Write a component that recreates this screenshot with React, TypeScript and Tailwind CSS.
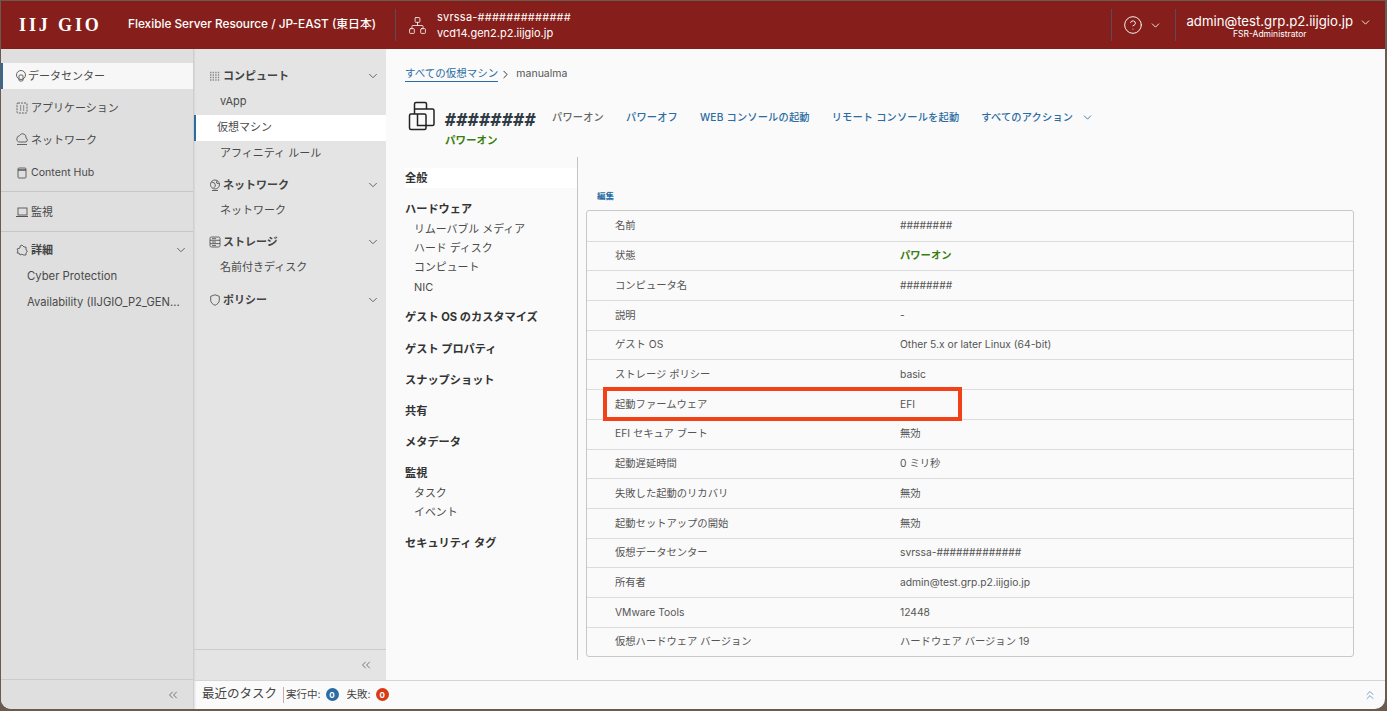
import { ChevronDown, ChevronRight, ChevronsLeft, ChevronsUp, CircleHelp, Network } from "lucide-react";
import type { ReactNode } from "react";

const rows = [
  ["名前", "########"],
  ["状態", "パワーオン"],
  ["コンピュータ名", "########"],
  ["説明", "-"],
  ["ゲスト OS", "Other 5.x or later Linux (64-bit)"],
  ["ストレージ ポリシー", "basic"],
  ["起動ファームウェア", "EFI"],
  ["EFI セキュア ブート", "無効"],
  ["起動遅延時間", "0 ミリ秒"],
  ["失敗した起動のリカバリ", "無効"],
  ["起動セットアップの開始", "無効"],
  ["仮想データセンター", "svrssa-#############"],
  ["所有者", "admin@test.grp.p2.iijgio.jp"],
  ["VMware Tools", "12448"],
  ["仮想ハードウェア バージョン", "ハードウェア バージョン 19"],
];

function Ico({ children }: { children: ReactNode }) {
  return (
    <svg width="14" height="14" viewBox="0 0 14 14" fill="none" stroke="#555" strokeWidth="0.9" className="shrink-0">
      {children}
    </svg>
  );
}

function SideItem({ icon, label, className }: { icon: ReactNode; label: string; className: string }) {
  return (
    <div className={`flex items-center gap-[2px] pl-[14px] text-[#4a4a4a] ${className}`}>
      {icon}
      <span>{label}</span>
    </div>
  );
}

function GroupHead({ icon, label, className }: { icon: ReactNode; label: string; className: string }) {
  return (
    <div className={`flex items-center pl-[14px] pr-[6px] text-[11px] font-bold text-[#444] ${className}`}>
      {icon}
      <span className="ml-[1px] flex-1">{label}</span>
      <ChevronDown size={14} strokeWidth={1.5} className="text-[#555]" />
    </div>
  );
}

function SubItem({ label, active }: { label: string; active?: boolean }) {
  return (
    <div className={`flex h-[26px] items-center pb-[2px] text-[11px] text-[#4a4a4a] ${active ? "border-l-[2px] border-[#2a6ca3] bg-white pl-[21px]" : "pl-[26px]"}`}>
      {label}
    </div>
  );
}

function LeftNav() {
  return (
    <div className="flex w-[193px] shrink-0 flex-col border-r border-[#cfcfcf] bg-[#dfdfdf] shadow-[1px_0_2px_rgba(0,0,0,0.12)]">
      <div className="flex-1 pt-[14px]">
        <div className="flex h-[26px] items-center border-l-[2px] border-[#2a6ca3] bg-[#f7f7f7] pl-[11px] text-[11px] text-[#4a4a4a]">
          <Ico>
            <circle cx="7" cy="6" r="4.5" />
            <rect x="5" y="6" width="4" height="6" rx="1" />
          </Ico>
          <span>データセンター</span>
        </div>
        <SideItem
          className="mt-[6px] h-[26px] text-[11px]"
          label="アプリケーション"
          icon={
            <Ico>
              <rect x="2" y="2" width="10" height="10" rx="1" strokeDasharray="2 1" />
              <path d="M5 5h1.2M8 5h1.2M5 7h1.2M8 7h1.2M5 9h1.2M8 9h1.2" strokeWidth="1.2" />
            </Ico>
          }
        />
        <SideItem
          className="mt-[6px] h-[26px] text-[11px]"
          label="ネットワーク"
          icon={
            <Ico>
              <path d="M3.5 9a3.5 3.5 0 0 1 1-6.4A3.5 3.5 0 0 1 11 5a2.2 2.2 0 0 1 0 4z" />
              <path d="M2 11.5h10" />
            </Ico>
          }
        />
        <SideItem
          className="mt-[7px] h-[26px] text-[10.6px]"
          label="Content Hub"
          icon={
            <Ico>
              <rect x="3" y="2" width="8" height="10" rx="1" />
              <path d="M3 4h8" strokeWidth="1.4" />
            </Ico>
          }
        />
        <div className="mt-[5px] border-t border-[#c6c6c6]" />
        <SideItem
          className="mt-[7px] h-[26px] text-[11px]"
          label="監視"
          icon={
            <Ico>
              <rect x="3" y="3" width="9" height="7" />
              <path d="M1 11.5h12" strokeWidth="1.2" />
            </Ico>
          }
        />
        <div className="mt-[6px] border-t border-[#c6c6c6]" />
        <div className="mt-[5px] flex h-[26px] items-center pl-[14px] pr-[5px] text-[11px] font-bold text-[#444]">
          <Ico>
            <path d="M2 6l3-1V3l2-1 2 2h2v3l1.5 1L11 10v2H8l-1-1-2 1-1-2H2l1-2z" />
          </Ico>
          <span className="ml-[2px] flex-1">詳細</span>
          <ChevronDown size={14} strokeWidth={1.5} className="text-[#555]" />
        </div>
        <div className="flex h-[26px] items-center pl-[26px] text-[11.3px] text-[#4a4a4a]">Cyber Protection</div>
        <div className="flex h-[26px] items-center whitespace-nowrap pl-[26px] text-[11.2px] text-[#4a4a4a]">Availability (IIJGIO_P2_GEN...</div>
      </div>
      <div className="flex h-[30px] items-center justify-end border-t border-[#cbcbcb] pr-[13px]">
        <ChevronsLeft size={14} strokeWidth={1.3} className="text-[#555]" />
      </div>
    </div>
  );
}

function SecondNav() {
  return (
    <div className="flex w-[192px] flex-col bg-[#e4e4e4] shadow-[inset_1px_0_1px_rgba(0,0,0,0.06)]">
      <div className="flex-1 pt-[14px]">
        <GroupHead
          className="h-[26px]"
          label="コンピュート"
          icon={
            <Ico>
              <path d="M2 3.5h10M2 6h10M2 8.5h10M2 11h10" strokeDasharray="1.4 1.2" strokeWidth="1.4" stroke="#888" />
            </Ico>
          }
        />
        <SubItem label="vApp" />
        <SubItem label="仮想マシン" active />
        <SubItem label="アフィニティ ルール" />
        <GroupHead
          className="mt-[5px] h-[26px]"
          label="ネットワーク"
          icon={
            <Ico>
              <circle cx="7" cy="6.5" r="4.5" />
              <path d="M3.5 4l3 1 1 3-2 2M9 2.5l-.5 2.5 3 1" />
              <path d="M4 12.5h6" />
            </Ico>
          }
        />
        <SubItem label="ネットワーク" />
        <GroupHead
          className="mt-[5px] h-[26px]"
          label="ストレージ"
          icon={
            <Ico>
              <rect x="2" y="2" width="10" height="10" rx="1.5" />
              <path d="M2 5.3h10M2 8.6h10M4 3.7h4M4 7h4M4 10.4h4" />
            </Ico>
          }
        />
        <SubItem label="名前付きディスク" />
        <GroupHead
          className="mt-[6px] h-[26px]"
          label="ポリシー"
          icon={
            <Ico>
              <path d="M7 1.8l4.3 1.5v4c0 2.4-2 4-4.3 5-2.3-1-4.3-2.6-4.3-5v-4z" />
            </Ico>
          }
        />
      </div>
      <div className="flex h-[31px] items-center justify-end border-t border-[#cbcbcb] pr-[13px]">
        <ChevronsLeft size={14} strokeWidth={1.3} className="text-[#555]" />
      </div>
    </div>
  );
}

function DetailNav() {
  const head = "flex items-center text-[11.2px] font-bold text-[#333]";
  const sub = "flex h-[19.4px] items-center pl-[9px] text-[10.9px] text-[#4a4a4a]";
  return (
    <div className="mt-[1px] w-[173px] shrink-0 border-r border-[#c4c4c4] pt-[11px]">
      <div className={`${head} h-[20px] bg-white`}>全般</div>
      <div className={`${head} mt-[11px] h-[20px]`}>ハードウェア</div>
      <div className={sub}>リムーバブル メディア</div>
      <div className={sub}>ハード ディスク</div>
      <div className={sub}>コンピュート</div>
      <div className={sub}>NIC</div>
      <div className={`${head} mt-[11px] h-[20px]`}>ゲスト OS のカスタマイズ</div>
      <div className={`${head} mt-[12px] h-[20px]`}>ゲスト プロパティ</div>
      <div className={`${head} mt-[11px] h-[20px]`}>スナップショット</div>
      <div className={`${head} mt-[11px] h-[20px]`}>共有</div>
      <div className={`${head} mt-[11px] h-[20px]`}>メタデータ</div>
      <div className={`${head} mt-[11px] h-[20px]`}>監視</div>
      <div className={sub}>タスク</div>
      <div className={sub}>イベント</div>
      <div className={`${head} mt-[11px] h-[20px]`}>セキュリティ タグ</div>
    </div>
  );
}

function Main() {
  return (
    <div className="flex-1 bg-[#fafafa] pl-[19px]">
      <div className="mt-[17px] flex h-[16px] items-center text-[10.5px]">
        <span className="border-b border-[#2a6ca3] text-[#2a6ca3]">すべての仮想マシン</span>
        <ChevronRight size={13} strokeWidth={1.8} className="mx-[1px] text-[#333]" />
        <span className="ml-[3px] text-[#555]">manualma</span>
      </div>
      <div className="mt-[18px] flex h-[56px]">
        <svg width="30" height="32" viewBox="0 0 30 32" fill="none" stroke="#222" strokeWidth="1.5" className="ml-[3px] mt-[1px] shrink-0">
          <path d="M6.5 13V3a1.5 1.5 0 0 1 1.5-1.5h9a1.5 1.5 0 0 1 1.5 1.5v5" />
          <path d="M6.5 8h18a1.5 1.5 0 0 1 1.5 1.5V23a1.5 1.5 0 0 1-1.5 1.5H18" />
          <rect x="1.5" y="13" width="16.5" height="15.5" rx="1.5" />
          <path d="M9.5 13v11.5H18" />
        </svg>
        <div className="ml-[7px]">
          <div className="mt-[8px] flex h-[24px] items-center text-[18px] font-bold leading-none tracking-[0.03em] text-[#2f3a45] [font-family:'DejaVu_Sans_Mono',monospace]">########</div>
          <div className="mt-[2px] text-[10.5px] font-bold leading-[14px] text-[#3b7d0e]">パワーオン</div>
        </div>
        <div className="ml-[16px] mt-[8px] flex h-[20px] items-center gap-[22px] text-[10.2px] font-medium tracking-[0.02em] text-[#2a6ca3]">
          <span className="text-[#666]">パワーオン</span>
          <span>パワーオフ</span>
          <span>WEB コンソールの起動</span>
          <span>リモート コンソールを起動</span>
          <span className="flex items-center gap-[8px]">
            すべてのアクション
            <ChevronDown size={13} strokeWidth={1.6} />
          </span>
        </div>
      </div>
      <div className="flex h-[504px]">
        <DetailNav />
        <div className="ml-[8px] w-[768px]">
          <div className="mt-[34px] h-[20px] pl-[11px] text-[8.5px] font-bold leading-[12px] text-[#2a6ca3]">編集</div>
          <div className="relative rounded-[3px] border border-[#c8c8c8]">
            {rows.map(([k, v], i) => (
              <div key={k} className={`flex h-[29.7px] items-center text-[10.3px] text-[#555] ${i ? "border-t border-[#dcdcdc]" : ""}`}>
                <span className="w-[313px] pl-[28px]">{k}</span>
                <span className={v === "パワーオン" ? "font-bold text-[#3b7d0e]" : ""}>{v}</span>
              </div>
            ))}
            <div className="absolute left-[16px] top-[176px] h-[34px] w-[359px] border-[4px] border-[#f24116]" />
          </div>
        </div>
      </div>
    </div>
  );
}

export default function App() {
  return (
    <div className="h-[711px] w-[1387px] overflow-hidden bg-[#6b5a4e] pb-[2px] pl-[1px] pr-[2px] pt-[1px] [font-family:Inter,'Noto_Sans_CJK_JP',sans-serif]">
      <div className="flex h-full flex-col overflow-hidden rounded-b-[10px] bg-[#fafafa]">
        <header className="flex h-[48px] shrink-0 items-center bg-[#861f1b] text-white">
          <div className="ml-[18px] w-[92px] whitespace-nowrap text-[18px] font-bold leading-none tracking-[0.16em] [font-family:'Liberation_Serif',serif]">IIJ GIO</div>
          <div className="ml-[17px] text-[11.8px] font-medium">Flexible Server Resource / JP-EAST (東日本)</div>
          <div className="ml-[19px] h-[32px] border-l border-[#5d4a55]" />
          <Network size={19} strokeWidth={1} className="ml-[12px]" />
          <div className="ml-[10px] text-[11px] leading-[16px]">
            <div className="tracking-[0.02em]">svrssa-#############</div>
            <div>vcd14.gen2.p2.iijgio.jp</div>
          </div>
          <div className="ml-auto h-[32px] border-l border-[#5d4a55]" />
          <CircleHelp size={20} strokeWidth={1.1} className="ml-[11px]" />
          <ChevronDown size={13} strokeWidth={1.6} className="ml-[6px]" />
          <div className="ml-[13px] h-[32px] border-l border-[#5d4a55]" />
          <div className="ml-[10px] pt-[3px] text-center">
            <div className="text-[13.2px] leading-[16px]">admin@test.grp.p2.iijgio.jp</div>
            <div className="text-[8.5px] leading-[11px]">FSR-Administrator</div>
          </div>
          <ChevronDown size={13} strokeWidth={1.6} className="mb-[6px] ml-[6px] mr-[13px]" />
        </header>
        <div className="flex flex-1">
          <LeftNav />
          <div className="flex flex-1 flex-col">
            <div className="flex h-[631px]">
              <SecondNav />
              <Main />
            </div>
            <div className="flex flex-1 items-center border-t border-[#d5d5d5] pb-[1px] pl-[8px] text-[#444]">
              <span className="text-[12.5px]">最近のタスク</span>
              <span className="ml-[6px] h-[16px] border-l border-[#c9a9a9]" />
              <span className="ml-[2px] text-[10.5px]">実行中:</span>
              <span className="ml-[5px] flex h-[13px] w-[13px] items-center justify-center rounded-full bg-[#2a6ca3] text-[8px] font-bold text-white">0</span>
              <span className="ml-[8px] text-[10.5px]">失敗:</span>
              <span className="ml-[5px] flex h-[13px] w-[13px] items-center justify-center rounded-full bg-[#d83a14] text-[8px] font-bold text-white">0</span>
              <ChevronsUp size={14} strokeWidth={1.3} className="ml-auto mr-[8px] text-[#3d85c6]" />
            </div>
          </div>
        </div>
      </div>
    </div>
  );
}
